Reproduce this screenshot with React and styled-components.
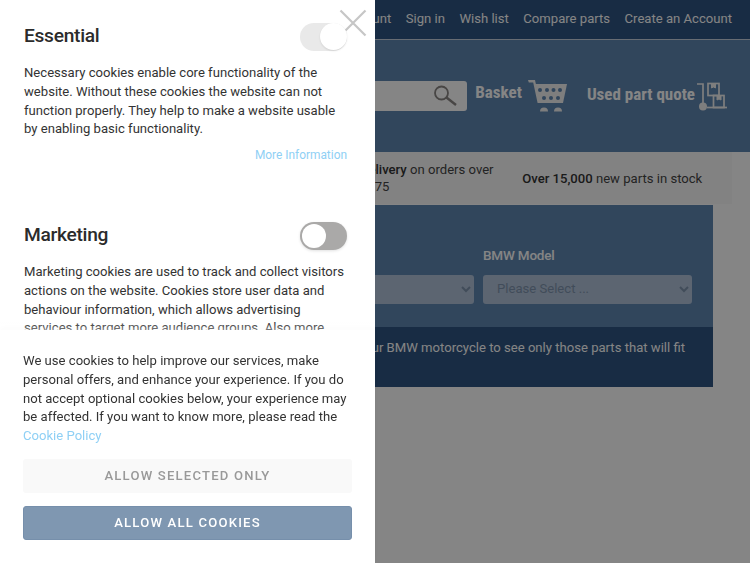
import React from 'react';
import styled, { createGlobalStyle } from 'styled-components';

const Global = createGlobalStyle`
  html, body { margin: 0; padding: 0; height: 100%; overflow: hidden; }
  body { font-family: Roboto, "Liberation Sans", sans-serif; font-size: 13.1px; }
  * { box-sizing: border-box; }
`;

function CartIcon() {
  return (
    <svg width="40" height="32" viewBox="0 0 40 32" fill="#f2f2f2">
      <path d="M0 0h7l5 23h-2.4L5.2 2.4H0.8z" />
      <path d="M6.5 4H39L35 23H11z" />
      <g fill="#5f86b0">
        {[12, 19, 25.5, 32].map((x) => <circle key={x} cx={x} cy="10" r="2" />)}
        {[16, 23, 30].map((x) => <circle key={x} cx={x} cy="18" r="2" />)}
      </g>
      <path d="M12 31.5a4 4 0 0 1 8 0zM26 31.5a4 4 0 0 1 8 0z" />
    </svg>
  );
}

function TrolleyIcon() {
  return (
    <svg width="30" height="32" viewBox="0 0 30 32" fill="none" stroke="#f2f2f2" strokeWidth="1.7">
      <path d="M0 4h6v20" />
      <circle cx="6" cy="26.5" r="4" fill="#f2f2f2" stroke="none" />
      <path d="M10 27.5H30" />
      <rect x="11" y="3.5" width="11" height="12" />
      <rect x="16.5" y="15.5" width="10.5" height="12" />
      <path d="M14.5 3.5v4.5l2-1 2 1V3.5M20 15.5v4.5l2-1 2 1v-4.5" fill="#f2f2f2" strokeWidth="1" />
    </svg>
  );
}

function SearchIcon() {
  return (
    <svg width="24" height="24" viewBox="0 0 24 24" fill="none" stroke="#8a8684">
      <circle cx="7.5" cy="9" r="6.5" strokeWidth="1.8" />
      <path d="M12.5 13.5l9.5 7.5" strokeWidth="2.4" />
    </svg>
  );
}

export default function App() {
  return (
    <>
      <Global />
      <Page>
        <TopBar>
          <TopLink>My Account</TopLink>
          <TopLink>Sign in</TopLink>
          <TopLink>Wish list</TopLink>
          <TopLink>Compare parts</TopLink>
          <TopLink>Create an Account</TopLink>
        </TopBar>
        <Header>
          <SearchBox>
            <SearchIcon />
          </SearchBox>
          <BasketLink>
            <BasketLabel>Basket</BasketLabel>
            <CartIcon />
          </BasketLink>
          <QuoteLink>
            <QuoteLabel>Used part quote</QuoteLabel>
            <TrolleyIcon />
          </QuoteLink>
        </Header>
        <InfoStrip>
          <InfoCell />
          <InfoCell>
            <b>Free express UK delivery</b> on orders over
            <br />
            £75
          </InfoCell>
          <InfoCell>
            <b>Over 15,000</b> new parts in stock
          </InfoCell>
        </InfoStrip>
        <Finder>
          <FinderFields>
            <Field>
              <FieldLabel>Year</FieldLabel>
              <Select><option>Please Select ...</option></Select>
            </Field>
            <Field>
              <FieldLabel>Series</FieldLabel>
              <Select><option>Please Select ...</option></Select>
            </Field>
            <Field>
              <FieldLabel>BMW Model</FieldLabel>
              <Select><option>Please Select ...</option></Select>
            </Field>
          </FinderFields>
          <FinderNote>
            Enter the details of your BMW motorcycle to see only those parts that will fit
          </FinderNote>
        </Finder>
      </Page>
      <Backdrop />
      <Panel>
        <CloseButton aria-label="Close">
          <svg width="28" height="28" viewBox="0 0 28 28" stroke="#c6c6c6" strokeWidth="2.2">
            <path d="M1.5 1.5l25 25M26.5 1.5l-25 25" />
          </svg>
        </CloseButton>
        <PanelScroll>
          <Section>
            <SectionHead>
              <SectionTitle>Essential</SectionTitle>
              <Toggle $on />
            </SectionHead>
            <Body>
              Necessary cookies enable core functionality of the website. Without these cookies the
              website can not function properly. They help to make a website usable by enabling
              basic functionality.
            </Body>
            <MoreLink>More Information</MoreLink>
          </Section>
          <Section>
            <SectionHead>
              <SectionTitle>Marketing</SectionTitle>
              <Toggle />
            </SectionHead>
            <Body>
              Marketing cookies are used to track and collect visitors actions on the website.
              Cookies store user data and behaviour information, which allows advertising services
              to target more audience groups. Also more customized experience can be provided.
            </Body>
          </Section>
        </PanelScroll>
        <PanelFooter>
          <FooterText>
            We use cookies to help improve our services, make personal offers, and enhance your
            experience. If you do not accept optional cookies below, your experience may be
            affected. If you want to know more, please read the <PolicyLink>Cookie Policy</PolicyLink>
          </FooterText>
          <ActionButton>Allow Selected Only</ActionButton>
          <ActionButton $primary>Allow All Cookies</ActionButton>
        </PanelFooter>
      </Panel>
    </>
  );
}

const Page = styled.div`
  width: 750px;
  height: 563px;
  background: #fff;
  display: flex;
  flex-direction: column;
  overflow: hidden;
`;

const TopBar = styled.div`
  height: 40px;
  padding: 0 18px 2px 0;
  background: #2f5582;
  border-bottom: 1px solid #c5d0dc;
  display: flex;
  justify-content: flex-end;
  align-items: center;
  gap: 14.5px;
`;

const TopLink = styled.span`
  color: #fff;
  font-size: 13.1px;
`;

const Header = styled.div`
  height: 112px;
  padding: 40px 23px 0 0;
  background: #5f86b0;
  display: flex;
  justify-content: flex-end;
  align-items: flex-start;
`;

const SearchBox = styled.div`
  width: 267px;
  height: 30px;
  margin: 1px 8px 0 0;
  padding: 0 9.5px;
  background: #fff;
  border-radius: 3px;
  display: flex;
  align-items: center;
  justify-content: flex-end;
`;

const BasketLink = styled.div`
  display: flex;
  align-items: flex-start;
  gap: 6px;
  margin-right: 19px;
`;

const BasketLabel = styled.span`
  margin-top: 2px;
  color: #fff;
  font-size: 17px;
  font-weight: 700;
  font-stretch: 75%;
`;

const QuoteLink = styled.div`
  display: flex;
  align-items: flex-start;
  gap: 2px;
`;

const QuoteLabel = styled(BasketLabel)`
  margin-top: 4px;
`;

const InfoStrip = styled.div`
  height: 52px;
  margin-left: 38px;
  width: 694px;
  background: #fafafa;
  display: grid;
  grid-template-columns: 223.5px 233.5px 234.5px;
  align-items: center;
`;

const InfoCell = styled.div`
  text-align: center;
  white-space: nowrap;
  color: #444;
  line-height: 17px;
  b { font-weight: 500; color: #333; }
`;

const Finder = styled.div`
  margin: 1px 37px 0 26px;
  background: #5f86b0;
  height: 182px;
  display: flex;
  flex-direction: column;
`;

const FinderFields = styled.div`
  height: 122px;
  padding: 41px 21px 0;
  display: grid;
  grid-template-columns: repeat(3, 1fr);
  gap: 9px;
`;

const Field = styled.div`
  display: flex;
  flex-direction: column;
  gap: 11px;
`;

const FieldLabel = styled.label`
  color: #fff;
  font-size: 13.5px;
  font-weight: 500;
  line-height: 18px;
  letter-spacing: -0.2px;
`;

const Select = styled.select`
  width: 100%;
  height: 29px;
  padding: 0 10px 3px;
  background-color: #b0c2d9;
  border: none;
  border-radius: 3px;
  color: #7e93ac;
  font-family: Roboto, sans-serif;
  font-size: 13.1px;
`;

const FinderNote = styled.div`
  flex: 1;
  padding: 12px 28px 0 0;
  background: #2f5582;
  color: #fff;
  text-align: right;
  white-space: nowrap;
  line-height: 18px;
  overflow: hidden;
`;

const Backdrop = styled.div`
  position: fixed;
  inset: 0;
  background: rgba(0, 0, 0, 0.48);
`;

const Panel = styled.aside`
  position: fixed;
  top: 0;
  left: 0;
  bottom: 0;
  width: 375px;
  background: #fff;
  display: flex;
  flex-direction: column;
  color: #333;
`;

const CloseButton = styled.button`
  position: absolute;
  top: 9px;
  left: 339px;
  padding: 0;
  background: none;
  border: none;
  line-height: 0;
`;

const PanelScroll = styled.div`
  height: 330px;
  padding: 24px 28px 0 24px;
  overflow: hidden;
`;

const Section = styled.section`
  height: 199px;
`;

const SectionHead = styled.div`
  height: 28px;
  margin-bottom: 12px;
  display: flex;
  justify-content: space-between;
  align-items: flex-start;
`;

const SectionTitle = styled.h3`
  margin: 0;
  color: #2b2b2b;
  font-size: 19.2px;
  line-height: 24px;
  font-weight: 500;
  letter-spacing: -0.3px;
`;

const Toggle = styled.span`
  position: relative;
  margin-top: -1px;
  width: 47px;
  height: 28px;
  border-radius: 14px;
  background: ${(p) => (p.$on ? '#e9e9e9' : '#aaa9a8')};
  box-shadow: ${(p) => (p.$on ? 'none' : '0 1px 3px rgba(0, 0, 0, 0.12)')};
  &::after {
    content: '';
    position: absolute;
    top: ${(p) => (p.$on ? '0' : '2px')};
    left: ${(p) => (p.$on ? '20px' : '2px')};
    width: ${(p) => (p.$on ? '27px' : '24px')};
    height: ${(p) => (p.$on ? '27px' : '24px')};
    border-radius: 50%;
    background: #fff;
    box-shadow: ${(p) => (p.$on ? '0 1px 2px rgba(0, 0, 0, 0.1)' : 'none')};
  }
`;

const Body = styled.p`
  margin: 0;
  font-size: 13.1px;
  line-height: 18.75px;
`;

const MoreLink = styled.a`
  display: block;
  margin-top: 8px;
  text-align: right;
  color: #8fd0f5;
  font-size: 11.9px;
  line-height: 16px;
`;

const PanelFooter = styled.div`
  position: relative;
  flex: 1;
  padding: 22px 23px 0;
  background: #fff;
  box-shadow: 0 -2px 6px rgba(0, 0, 0, 0.02);
  &::before {
    content: '';
    position: absolute;
    top: -8px;
    left: 0;
    right: 0;
    height: 8px;
    background: linear-gradient(rgba(255, 255, 255, 0), rgba(255, 255, 255, 0.35));
  }
`;

const FooterText = styled.p`
  margin: 0 0 13px;
  font-size: 13.1px;
  line-height: 18.75px;
`;

const PolicyLink = styled.a`
  color: #8fd0f5;
`;

const ActionButton = styled.button`
  display: block;
  width: 100%;
  height: 34px;
  margin-bottom: 13px;
  padding: 0 0 1px;
  border: ${(p) => (p.$primary ? '1px solid #768fab' : 'none')};
  border-radius: 3px;
  background: ${(p) => (p.$primary ? '#7f97b1' : '#f9f9f9')};
  color: ${(p) => (p.$primary ? '#fff' : '#999')};
  font-family: Roboto, sans-serif;
  font-size: 13.1px;
  font-weight: 500;
  letter-spacing: 1.2px;
  text-transform: uppercase;
`;
